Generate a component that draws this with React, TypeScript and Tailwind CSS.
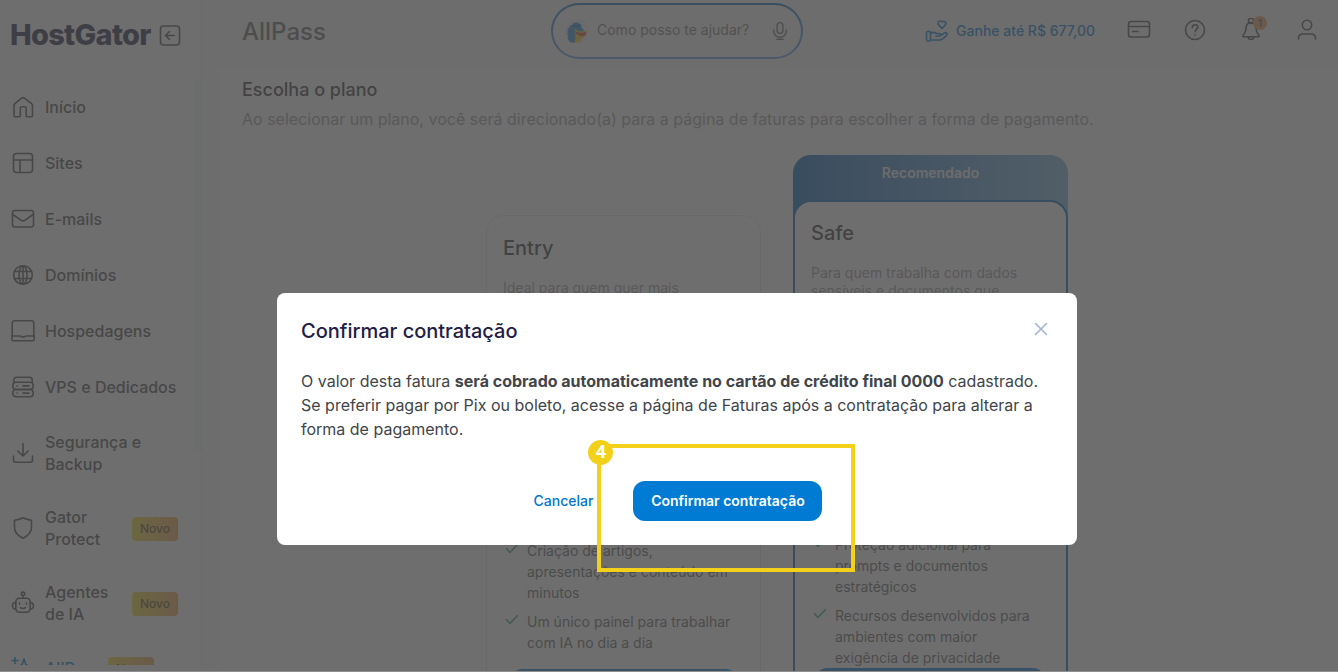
import React from 'react'

const stroke = {
  fill: 'none',
  stroke: 'currentColor',
  strokeWidth: 1.6,
  strokeLinecap: 'round' as const,
  strokeLinejoin: 'round' as const,
}

function Icon({ children, className = 'size-6' }: { children: React.ReactNode; className?: string }) {
  return (
    <svg viewBox="0 0 24 24" className={`shrink-0 ${className}`} aria-hidden="true" {...stroke}>
      {children}
    </svg>
  )
}

const HomeIcon = () => (
  <Icon>
    <path d="M3 10.500c0-.8.3-1.500 1-2l6.700-5.300a2.200 2.200 0 0 1 2.700 0L20.500 8.500c.6.500 1 1.200 1 2v10.200c0 .6-.4 1-1 1h-4.300c-.6 0-1-.4-1-1V13.500a1.700 1.700 0 0 0-1.700-1.700h-2.500a1.700 1.700 0 0 0-1.700 1.700v7.200c0 .6-.4 1-1 1H4c-.6 0-1-.4-1-1z" />
  </Icon>
)
const SitesIcon = () => (
  <Icon>
    <rect x="2.500" y="2.500" width="19" height="19" rx="3" />
    <path d="M2.500 9h19M9 9v12.500" />
  </Icon>
)
const MailIcon = () => (
  <Icon>
    <rect x="1.500" y="3.500" width="21" height="16.500" rx="2.500" />
    <path d="M1.800 7.500l8.500 5.800c1 .7 2.400.7 3.400 0l8.500-5.800" />
  </Icon>
)
const GlobeIcon = () => (
  <Icon>
    <circle cx="12" cy="12" r="9.300" />
    <ellipse cx="12" cy="12" rx="4" ry="9.300" />
    <path d="M3.600 8.500h16.800M3.600 15.500h16.800M12 2.700v18.600" />
  </Icon>
)
const LaptopIcon = () => (
  <Icon>
    <path d="M1.200 17V4c0-1.200.9-2.200 2.200-2.200h17.200c1.300 0 2.200 1 2.200 2.200v13" />
    <path d="M.8 17h8.200c.7 0 1 .9 1.800.9h2.400c.8 0 1.100-.9 1.800-.9h8.200v3.500c0 .7-.5 1.200-1.200 1.200H2c-.7 0-1.200-.5-1.200-1.200z" />
  </Icon>
)
const ServerIcon = () => (
  <Icon>
    <path d="M2.800 7.500V5c0-1.700 1.100-2.800 2.800-2.800h12.800c1.700 0 2.800 1.100 2.800 2.800v2.500" />
    <rect x="1.800" y="7.300" width="20.400" height="7.200" rx="3.200" />
    <rect x="1.800" y="14.500" width="20.400" height="7.200" rx="3.200" />
    <path d="M12 10.900h6M12 18.100h6M6 10.900h.2M6 18.100h.2" />
  </Icon>
)
const DownloadIcon = () => (
  <Icon>
    <path d="M12 2.500v12M6.800 10l5.200 5 5.200-5M2.500 15v4c0 1.300.8 2.200 2.200 2.200h14.600c1.400 0 2.200-.9 2.200-2.200v-4" />
  </Icon>
)
const ShieldIcon = () => (
  <Icon>
    <path d="M12 1.800c2.700 1.500 5.400 2.200 8.500 2.400v7.300c0 4.900-3.300 8.200-8.500 10.800-5.200-2.600-8.500-5.900-8.500-10.800V4.200C6.600 4 9.300 3.300 12 1.800z" />
  </Icon>
)
const RobotIcon = () => (
  <Icon>
    <circle cx="12" cy="2.800" r="1.700" />
    <path d="M12 4.500v2.800M4.800 11.500c-2 0-3.300 1-3.300 3.200s1.300 3.300 3.300 3.300M19.200 11.500c2 0 3.300 1 3.300 3.200s-1.300 3.300-3.300 3.300M8.500 12v1.300M15.500 12v1.300M9.500 16.700c1.500 1 3.500 1 5 0" />
    <rect x="4.800" y="7.300" width="14.400" height="14" rx="3.500" />
  </Icon>
)
const SparkleIcon = () => (
  <Icon>
    <path d="M4 1.500v6M1 4.500h6M13 3l1.800 5.500L20 11l-5.200 1.800L13 18l-1.800-5.200L6 11l5.200-2.500z" />
  </Icon>
)
const Check = () => (
  <svg viewBox="0 0 14 14" className="mt-0.5 size-3.5 shrink-0 text-[#1c9a6c]" aria-hidden="true" {...stroke} strokeWidth={1.3}>
    <path d="M1.500 6.500L5 10.500 12.500 2.500" />
  </svg>
)

const nav = [
  { label: 'Início', icon: <HomeIcon /> },
  { label: 'Sites', icon: <SitesIcon /> },
  { label: 'E-mails', icon: <MailIcon /> },
  { label: 'Domínios', icon: <GlobeIcon /> },
  { label: 'Hospedagens', icon: <LaptopIcon /> },
  { label: 'VPS e Dedicados', icon: <ServerIcon /> },
  { label: 'Segurança e Backup', icon: <DownloadIcon />, tall: true },
  { label: 'Gator Protect', icon: <ShieldIcon />, tall: true, badge: true },
  { label: 'Agentes de IA', icon: <RobotIcon />, tall: true, badge: true },
  { label: 'AllPass', icon: <SparkleIcon />, badge: true, active: true },
]

function Sidebar() {
  return (
    <aside className="flex w-[202px] shrink-0 flex-col border-r border-[#f2f2f2] bg-white pb-[7px]">
      <div className="flex h-[79px] shrink-0 items-start gap-[7px] pt-[15px] pl-2.5">
        <span className="text-[29px] leading-10 font-extrabold tracking-tight text-[#1f2044]">HostGator</span>
        <button type="button" aria-label="Recolher menu" className="mt-2 text-[#4a4a4a]">
          <Icon>
            <rect x="2.500" y="3" width="19" height="19" rx="3" />
            <path d="M16.500 12.500H8M11.500 8.500l-4 4 4 4" />
          </Icon>
        </button>
      </div>
      <div className="flex min-h-0 flex-1">
        <nav className="min-w-0 flex-1 overflow-hidden">
          <ul>
            {nav.map((n) => (
              <li key={n.label}>
                <a
                  href="#"
                  className={`flex items-center pl-[11px] text-base leading-[22px] font-medium ${n.tall ? 'h-[75px]' : 'h-14'} ${n.active ? 'text-[#0077d0]' : 'text-[#4a4a4a]'}`}
                >
                  {n.icon}
                  <span
                    className={`ml-2.5 ${n.badge && n.tall ? 'mr-2.5 w-[77px]' : n.tall ? 'w-28' : n.active ? 'w-[63px]' : 'whitespace-nowrap'}`}
                  >
                    {n.label}
                  </span>
                  {n.badge && (
                    <span className="mt-0.5 flex h-6 w-[46px] shrink-0 items-center justify-center rounded bg-linear-to-r from-[#f0dc28] to-[#f0a050] text-xs text-[#5a4a20]">
                      Novo
                    </span>
                  )}
                </a>
              </li>
            ))}
          </ul>
        </nav>
        <div className="h-[372px] w-1.5 shrink-0 bg-[#f0f5f3]" />
      </div>
    </aside>
  )
}

function Mascot() {
  return (
    <svg viewBox="0 0 24 24" className="size-6 shrink-0" aria-hidden="true">
      <circle cx="12" cy="12" r="12" fill="#f0f0fa" />
      <path
        d="M5 23c-2-2-3-4-2-6-1-1-1-3 0-4-1-1-1-3 1-4 0-2 2-3 3-3 1-2 2-3 4-2 1-1 3-1 3 1 2-1 3 1 2 3l3 3-1 3-6 0 1 5-4 5z"
        fill="#2f8fe0"
      />
      <path d="M10 11c3 3 8 3 11 1 1 3-1 6-5 6-3 0-5-3-6-7z" fill="#e0502c" />
      <path d="M9 12c2 4 6 6 11 5-1 2-3 3-4 3l-1 3.500H9c2-3 2-7 0-11.500z" fill="#f5cf1c" />
      <path d="M9.500 10.500c3 3 8 3 11.500 1.500" stroke="#f5cf1c" strokeWidth="1.500" fill="none" />
      <path d="M9 6.500v1.500M13 6v1.500" stroke="#123a78" strokeWidth="1.500" />
    </svg>
  )
}

function Header() {
  return (
    <header className="flex h-[70px] shrink-0 items-start pr-[19px] pl-10">
      <h1 className="mt-4 w-[309px] text-2xl leading-8 font-medium text-[#666]">AllPass</h1>
      <div className="mt-[3px] h-14 w-[252px] rounded-full bg-linear-to-b from-[#0070c4] to-[#5e9ee8] p-0.5">
        <div className="flex h-full items-center rounded-full bg-[#fafafa] pr-[11px] pl-3">
          <Mascot />
          <input
            aria-label="Como posso te ajudar?"
            placeholder="Como posso te ajudar?"
            className="ml-2 w-[170px] min-w-0 flex-1 bg-transparent pb-0.5 text-sm text-[#666] outline-none placeholder:text-[#777]"
          />
          <button type="button" aria-label="Falar" className="text-[#666]">
            <Icon className="size-5">
              <rect x="8.500" y="2" width="7" height="13" rx="3.500" />
              <path d="M4.500 10.500v1.500a7.500 7.500 0 0 0 15 0v-1.500M12 19.500V22M8 22h8" />
            </Icon>
          </button>
        </div>
      </div>
      <div className="mt-[17px] ml-auto flex items-center text-[#4a4a4a]">
        <a href="#" className="mr-8 flex items-center gap-[7px] pt-0.5 text-[#0077d0]">
          <Icon>
            <path d="M17 9.500l-3.300-3.600c-1-1.200-.8-2.700.2-3.500 1-.8 2.400-.4 3 .6.800-.9 2.300-1.100 3.200-.2 1 1 .9 2.400 0 3.500z" />
            <rect x="1.500" y="12.500" width="4" height="9.500" rx="1" />
            <path d="M5.500 14.500c2-1.500 4-1.500 6 0h3c1.600 0 1.600 2.500 0 2.500H11M15.500 16.500l4-2.500c1.800-1 3.500.5 2.300 2l-3.500 3.300c-1 1-2 1.700-3.500 1.700H5.500" />
          </Icon>
          <span className="text-sm font-medium">Ganhe até R$ 677,00</span>
        </a>
        <div className="flex items-center gap-8">
          <button type="button" aria-label="Pagamentos">
            <Icon>
              <rect x="1.500" y="3.500" width="21" height="15.500" rx="2.500" />
              <path d="M1.500 8.500h21M5.500 13.500H11" />
            </Icon>
          </button>
          <button type="button" aria-label="Ajuda">
            <Icon>
              <circle cx="12" cy="12" r="9.500" />
              <path d="M9.300 9.500c0-1.700 1.200-2.800 2.800-2.800s2.700 1.100 2.700 2.600c0 2-2.700 2.200-2.700 4.500M12 16.800v.2" />
            </Icon>
          </button>
          <button type="button" aria-label="Notificações" className="relative">
            <Icon>
              <circle cx="12" cy="2.800" r="2.600" />
              <path d="M12 4.800c-3.200 0-4.800 2.200-4.900 5-.1 3.500-1.200 5.500-3.100 7.800-.4.600-.1 1.100.5 1.100h15c.6 0 .9-.5.5-1.100-1.900-2.300-3-4.300-3.100-7.800-.1-2.800-1.700-5-4.900-5zM9.300 19c0 1.600 1.200 2.500 2.700 2.500s2.700-.9 2.700-2.500" />
            </Icon>
            <span className="absolute -top-0.5 left-3.5 flex size-3.5 items-center justify-center rounded-full bg-[#f09a5a] text-[10px] font-medium">
              1
            </span>
          </button>
          <button type="button" aria-label="Conta">
            <Icon>
              <circle cx="12" cy="7" r="4.700" />
              <path d="M3.500 21v-.5c0-2.800 1.700-4.500 4.500-4.500h8c2.800 0 4.500 1.700 4.500 4.500v.5" />
            </Icon>
          </button>
        </div>
      </div>
    </header>
  )
}

function Feature({ children }: { children: React.ReactNode }) {
  return (
    <li className="flex gap-2">
      <Check />
      <span className="text-sm leading-[21px] text-[#5c5c5c]">{children}</span>
    </li>
  )
}

function Plans() {
  return (
    <div className="flex items-start justify-center gap-8">
      <section className="mt-[60px] w-[275px] rounded-[18px] border border-[#e4e4e4] bg-white px-4 pb-6">
        <h3 className="pt-4 text-xl leading-8 font-medium text-[#333]">Entry</h3>
        <p className="mt-3.5 h-[252px] text-sm leading-5 text-[#999]">
          Ideal para quem quer mais
          <br />
          produtividade no dia a dia
        </p>
        <ul className="mt-2.5 flex flex-col gap-2 pl-0.5">
          <Feature>
            Criação de artigos,
            <br />
            apresentações e conteúdo em
            <br />
            minutos
          </Feature>
          <Feature>
            Um único painel para trabalhar
            <br />
            com IA no dia a dia
          </Feature>
        </ul>
        <button type="button" className="mt-4 ml-[7px] h-12 w-[228px] rounded-xl bg-[#0077d0] text-sm font-semibold text-white">
          Contratar
        </button>
      </section>
      <section className="w-[275px] rounded-[18px] bg-linear-to-r from-[#0062b8] to-[#78b4e0]">
        <p className="h-[45px] pt-2 text-center text-sm font-semibold text-[#f4f4f4]">Recomendado</p>
        <div className="rounded-[18px] border-2 border-[#0062b8] bg-white px-4 pb-6">
          <h3 className="pt-[15px] text-xl leading-8 font-medium text-[#333]">Safe</h3>
          <p className="mt-[15px] h-[252px] text-sm leading-[18px] text-[#999]">
            Para quem trabalha com dados
            <br />
            sensíveis e documentos que
            <br />
            exigem proteção
          </p>
          <ul className="mt-[18px] flex flex-col gap-2 pl-0.5">
            <Feature>
              Proteção adicional para
              <br />
              prompts e documentos
              <br />
              estratégicos
            </Feature>
            <Feature>
              Recursos desenvolvidos para
              <br />
              ambientes com maior
              <br />
              exigência de privacidade
            </Feature>
          </ul>
          <button type="button" className="ml-1 h-12 w-[230px] rounded-xl bg-[#0077d0] text-sm font-semibold text-white">
            Contratar
          </button>
        </div>
      </section>
    </div>
  )
}

function ConfirmDialog() {
  return (
    <div className="fixed inset-0 flex items-start justify-center border-b border-[#8f8f8f] bg-[#474747]/79 pt-[293px] pl-4">
      <div role="dialog" aria-modal="true" aria-labelledby="dialog-title" className="w-[800px] rounded-lg bg-white p-6">
        <div className="flex items-start justify-between">
          <h2 id="dialog-title" className="text-xl leading-7 font-medium text-[#1f2044]">
            Confirmar contratação
          </h2>
          <button type="button" aria-label="Fechar" className="text-[#a3b3d0]">
            <Icon>
              <path d="M6.500 6.500l11 11M17.500 6.500l-11 11" />
            </Icon>
          </button>
        </div>
        <p className="mt-6 text-base leading-6 text-[#414549]">
          O valor desta fatura <strong className="font-bold">será cobrado automaticamente no cartão de crédito final 0000</strong> cadastrado.
          <br />
          Se preferir pagar por Pix ou boleto, acesse a página de Faturas após a contratação para alterar a
          <br />
          forma de pagamento.
        </p>
        <div className="mt-10 flex justify-center gap-6 pr-3.5">
          <button type="button" className="h-10 px-4 text-sm font-medium text-[#0077d0]">
            Cancelar
          </button>
          <div className="relative">
            <button type="button" className="h-10 w-[189px] rounded-xl bg-[#007bd3] text-sm font-semibold whitespace-nowrap text-white">
              Confirmar contratação
            </button>
            <div className="pointer-events-none absolute -top-[37px] -right-[33px] -bottom-[51px] -left-9 border-4 border-[#f3d11b]">
              <span className="absolute -top-2 -left-[13px] flex size-[25px] items-center justify-center rounded-full bg-[#f3d11b] pb-1 font-['Open_Sans',sans-serif] text-lg leading-none font-bold text-white">
                4
              </span>
            </div>
          </div>
        </div>
      </div>
    </div>
  )
}

export default function App() {
  return (
    <div className="flex h-screen overflow-hidden bg-[#fafafa] font-['Inter','Liberation_Sans',sans-serif]">
      <Sidebar />
      <div className="flex min-w-0 flex-1 flex-col">
        <Header />
        <main className="ml-4 min-h-0 flex-1 overflow-hidden bg-white pt-2 pr-[26px] pl-6">
          <h2 className="text-lg leading-6 font-medium text-[#333]">Escolha o plano</h2>
          <p className="mt-[5px] text-base leading-6 text-[#999]">
            Ao selecionar um plano, você será direcionado(a) para a página de faturas para escolher a forma de pagamento.
          </p>
          <div className="mt-6">
            <Plans />
          </div>
        </main>
      </div>
      <ConfirmDialog />
    </div>
  )
}
